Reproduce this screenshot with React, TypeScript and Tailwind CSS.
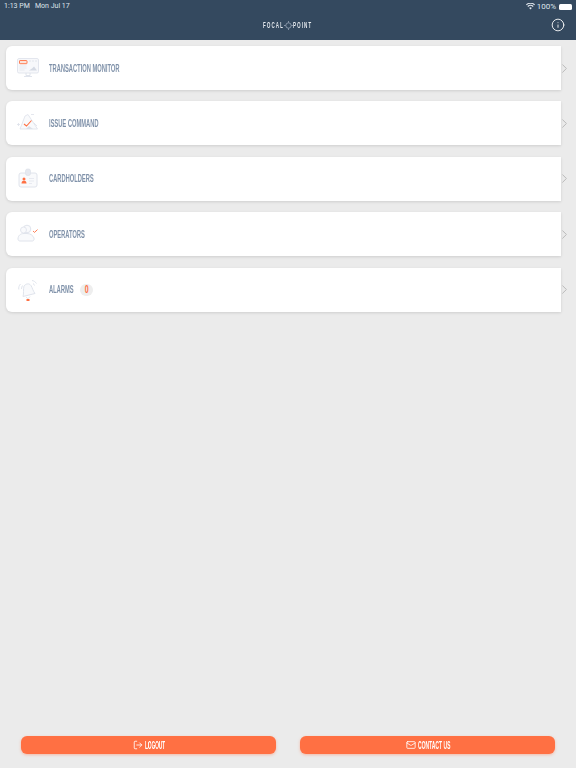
import { Info, LogOut, Mail, ChevronRight } from 'lucide-react';

const label = "font-['Liberation_Sans',sans-serif] font-bold uppercase whitespace-nowrap inline-block origin-left will-change-transform";
const logoText = "w-[21px] h-[10px] leading-[10px] text-[9px] font-bold tracking-[2.200px] inline-block origin-left scale-x-[0.5] whitespace-nowrap will-change-transform font-['Liberation_Sans',sans-serif]";

function MonitorIcon() {
  return (
    <svg viewBox="0 0 24 24" className="w-[24px] h-[24px]" fill="none">
      <rect x="1.500" y="2.500" width="21" height="14.500" rx="1.500" fill="#f7f8fb" stroke="#dde1ea" strokeWidth="0.800" />
      <rect x="3.500" y="4.500" width="7.500" height="3.200" rx="0.600" fill="#fbe3da" stroke="#ff7043" strokeWidth="0.900" />
      <path d="M3.500 10h7M3.500 12h7M3.500 14h5" stroke="#e3e6ee" strokeWidth="0.800" />
      <path d="M13 5h2M16 5h2M19 5h2" stroke="#dde1ea" strokeWidth="0.800" />
      <path d="M13 14.500l3-2 2-2 3 4z" fill="#d5dae4" />
      <path d="M10 17v2.500h4V17M8 20.500h8" stroke="#dde1ea" strokeWidth="0.900" />
    </svg>
  );
}

function CommandIcon() {
  return (
    <svg viewBox="0 0 24 24" className="w-[24px] h-[24px]" fill="none">
      <path d="M9 5l3-1.500 9.500 14.500H4l2-5z" fill="#f9fafc" stroke="#dde1ea" strokeWidth="0.800" />
      <path d="M8 13l2.500 2 5-5.500" stroke="#ff7043" strokeWidth="1.100" />
      <path d="M1 13.500h3M2.500 12v3M15 3.500h3M18 12l3 3" stroke="#dde1ea" strokeWidth="0.800" />
      <path d="M13 15l4 3h-7z" fill="#dde1ea" />
    </svg>
  );
}

function CardIcon() {
  return (
    <svg viewBox="0 0 24 24" className="w-[24px] h-[24px]" fill="none">
      <rect x="3" y="6" width="18" height="14" rx="2" fill="#f9fafc" stroke="#dde1ea" strokeWidth="0.900" />
      <rect x="9.500" y="2" width="5" height="6.500" rx="2" fill="#e6e9f0" stroke="#dde1ea" strokeWidth="0.700" />
      <circle cx="8" cy="12" r="1.500" fill="#ff7043" />
      <path d="M5.500 16.500c0-2 1-2.700 2.500-2.700s2.500.7 2.500 2.700z" fill="#ff7043" />
      <path d="M13 11.500h5M13 14h5M13 16.500h3" stroke="#e3e6ee" strokeWidth="0.800" />
    </svg>
  );
}

function OperatorIcon() {
  return (
    <svg viewBox="0 0 24 24" className="w-[24px] h-[24px]" fill="none">
      <circle cx="11" cy="7" r="3.800" fill="#f9fafc" stroke="#dde1ea" strokeWidth="0.900" />
      <circle cx="7.500" cy="8" r="3" fill="#f9fafc" stroke="#dde1ea" strokeWidth="0.800" />
      <path d="M2 17c0-3.500 2.500-5.500 6-5.500h3c3.500 0 6 2 7 4.500.500 1.500-.5 3-1.500 3H4c-1.200 0-2-.800-2-2z" fill="#f9fafc" stroke="#dde1ea" strokeWidth="0.900" />
      <path d="M17 9l1.500 1.400 3-2.800" stroke="#ff7043" strokeWidth="0.900" />
    </svg>
  );
}

function BellIcon() {
  return (
    <svg viewBox="0 0 24 24" className="w-[24px] h-[24px]" fill="none">
      <path d="M8 8c2-2.500 5-3 7-.5 1.500 2.500 2 5.500 4 8L7 18.500c1-3 0-7 1-10.500z" fill="#f9fafc" stroke="#dde1ea" strokeWidth="0.900" />
      <path d="M10 19l2 1.800 2-2.300" stroke="#dde1ea" strokeWidth="0.800" />
      <rect x="10.500" y="21" width="3" height="2" fill="#ff7043" />
      <path d="M4.500 6C3 7.500 2.500 9.500 2.800 11.500M6.500 7.500C6 8.500 5.500 9.500 5.500 11M16 2.500c2 .3 3.500 1.500 4.500 3M17 5.500c.8.500 1.200 1 1.500 2" stroke="#dde1ea" strokeWidth="0.900" />
    </svg>
  );
}

const rows = [
  { name: 'Transaction Monitor', icon: <MonitorIcon />, box: 'w-[71px]' },
  { name: 'Issue Command', icon: <CommandIcon />, box: 'w-[51px]' },
  { name: 'Cardholders', icon: <CardIcon />, box: 'w-[44px]' },
  { name: 'Operators', icon: <OperatorIcon />, box: 'w-[35px]' },
  { name: 'Alarms', icon: <BellIcon />, box: 'w-[26px]', badge: '0' },
];

export default function App() {
  return (
    <div className="flex flex-col h-[768px] bg-[#ebebeb] overflow-hidden font-['Roboto',sans-serif]">
      {/* Header */}
      <header className="relative h-10 bg-[#34495f] text-white shrink-0">
        <div className="flex justify-between items-center h-[12px] px-[4px] text-[#dfe5ec] leading-none">
          <div className="flex gap-[6px] mt-px text-[7px] whitespace-nowrap">
            <span className="w-[25px]">1:13 PM</span>
            <span>Mon Jul 17</span>
          </div>
          <div className="flex items-center gap-[2px] mt-px text-[8px]">
            <svg viewBox="0 0 16 12" className="w-[9px] h-[7px]" fill="currentColor">
              <path d="M8 11.500L5.600 8.700a3.400 3.400 0 014.800 0zM3.900 6.900l-1.500-1.700a8 8 0 0111.200 0l-1.500 1.700a5.800 5.800 0 00-8.200 0zM1.300 3.900L0 2.400a11.600 11.600 0 0116 0l-1.300 1.500a9.800 9.800 0 00-13.400 0z" />
            </svg>
            <span>100%</span>
            <span className="w-[13px] h-[6px] rounded-[1.500px] bg-white ml-px" />
          </div>
        </div>
        <div className="flex items-center justify-center h-[28px] pb-[2px] text-[#e8ecf1]">
          <span className={logoText}>FOCAL</span>
          <svg viewBox="0 0 10 10" className="w-[9px] h-[9px]" fill="none" stroke="#8d9cae" strokeWidth="1">
            <circle cx="5" cy="5" r="3" />
            <path d="M5 0v2M5 8v2M0 5h2M8 5h2" />
          </svg>
          <span className={logoText}>POINT</span>
        </div>
        <Info className="absolute right-[11px] top-[18px] w-[14px] h-[14px]" strokeWidth={1.5} />
      </header>

      {/* Menu list */}
      <main className="flex flex-col gap-[11.400px] pt-[6px]">
        {rows.map((row) => (
          <div key={row.name} className="flex items-center pl-[6px]">
            <div className="flex items-center w-[555px] h-[44px] bg-white rounded-l-[6px] shadow-[0_1px_3px_rgba(0,0,0,0.12)]">
              <div className="flex justify-center w-[43px] shrink-0">{row.icon}</div>
              <span className={`${row.box} ${label} scale-x-[0.5] text-[11.500px] leading-[12px] -mt-px text-[#7f91a9]`}>{row.name}</span>
              {row.badge && (
                <span className="flex items-center justify-center ml-[5px] w-[13px] h-[12px] rounded-full bg-[#eeeeee]">
                  <span className="text-[10px] font-bold text-[#ff7043] scale-x-[0.7] font-['Liberation_Sans',sans-serif]">{row.badge}</span>
                </span>
              )}
            </div>
            <ChevronRight className="w-[15px] h-[15px] ml-[-4.500px] text-[#b5b5b5] shrink-0" strokeWidth={1.5} />
          </div>
        ))}
      </main>

      {/* Footer buttons */}
      <footer className="flex justify-between mt-auto mb-[14px] px-[21px]">
        <button className="flex items-center justify-center gap-[2px] w-[255px] h-[18px] rounded-[6px] bg-[#ff7043] text-white shadow-[0_1px_3px_rgba(255,112,67,0.4)]">
          <LogOut className="w-[10px] h-[10px]" />
          <span className={`${label} w-[20px] scale-x-[0.47] text-[10px]`}>Logout</span>
        </button>
        <button className="flex items-center justify-center gap-[2px] w-[255px] h-[18px] rounded-[6px] bg-[#ff7043] text-white shadow-[0_1px_3px_rgba(255,112,67,0.4)]">
          <Mail className="w-[10px] h-[10px]" />
          <span className={`${label} w-[32px] scale-x-[0.5] text-[10px]`}>Contact Us</span>
        </button>
      </footer>
    </div>
  );
}
